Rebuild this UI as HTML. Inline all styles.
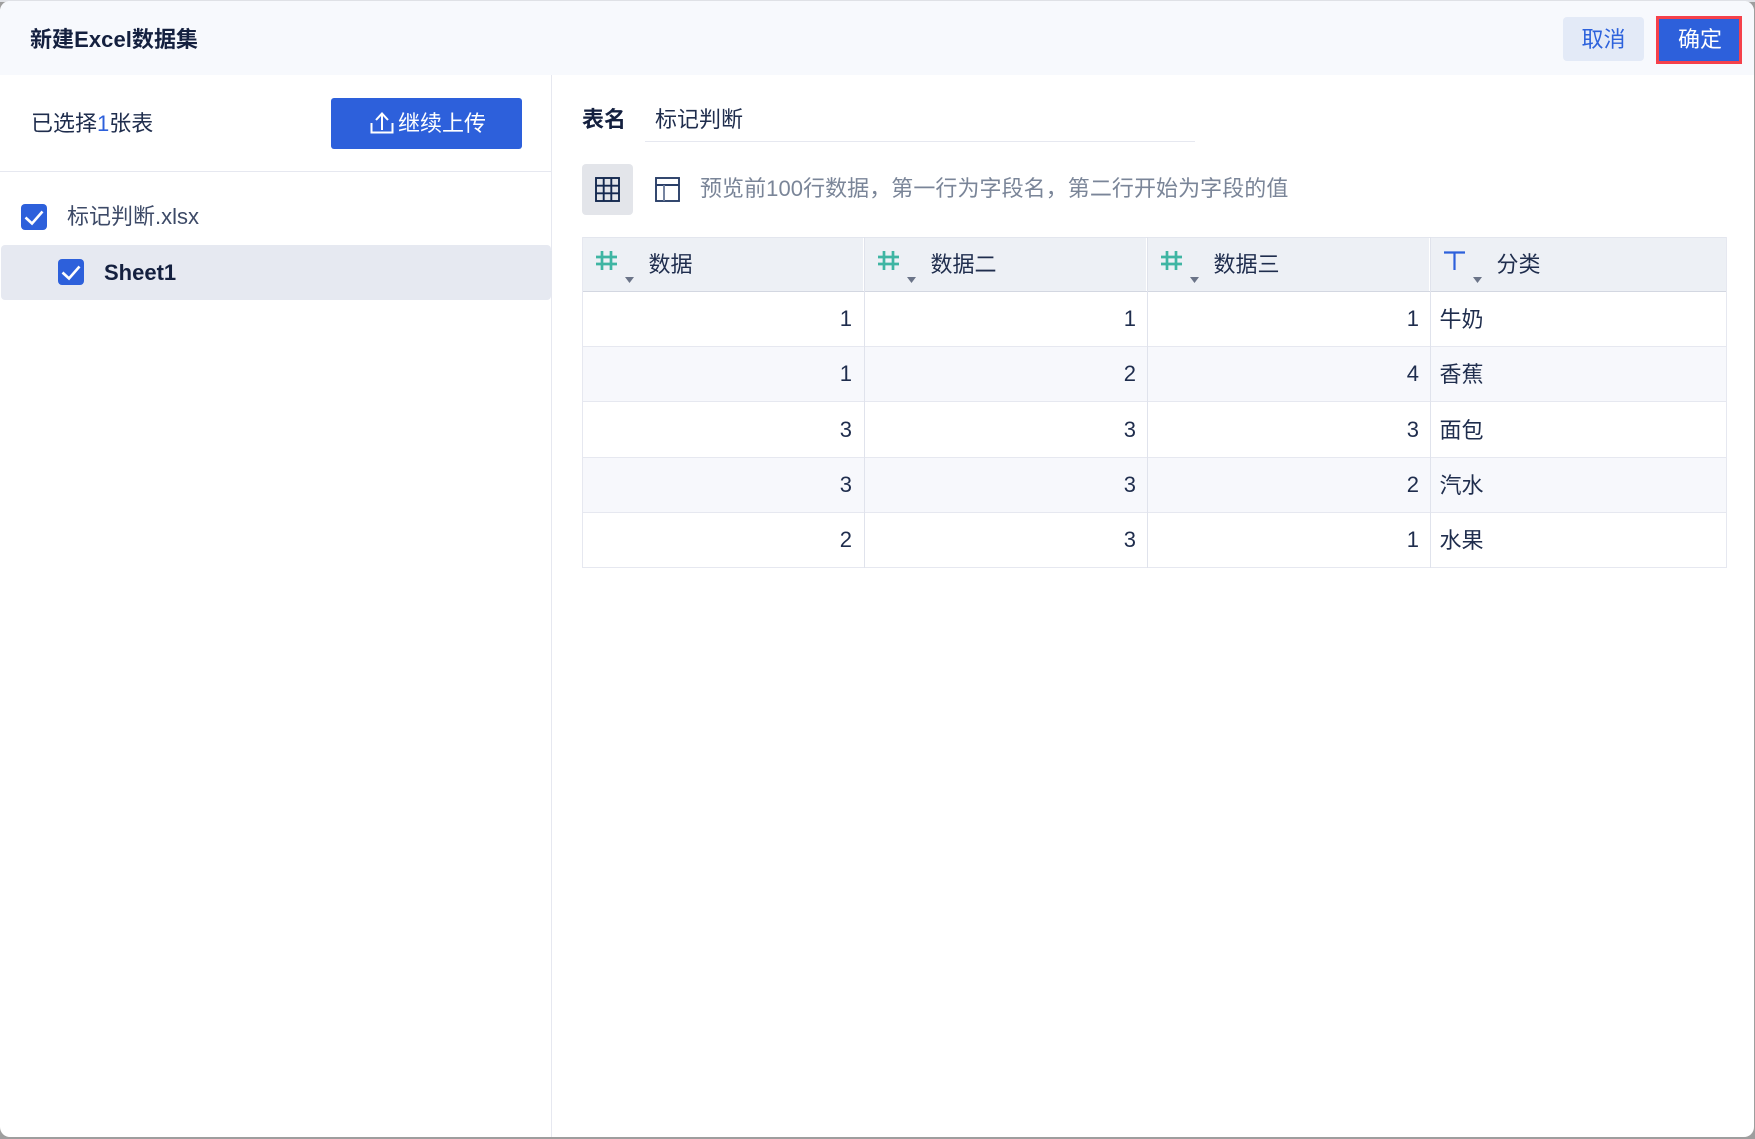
<!DOCTYPE html>
<html lang="zh">
<head>
<meta charset="utf-8">
<title>新建Excel数据集</title>
<style>
html,body{margin:0;padding:0;width:1755px;height:1139px;overflow:hidden;background:#9e9e9e;}
body{position:relative;font-family:"Liberation Sans","Noto Sans CJK SC",sans-serif;font-size:22px;color:#1f2d4d;}
.abs,.t,.r,svg{position:absolute;}
.t{white-space:nowrap;line-height:30px;height:30px;}
.r{white-space:nowrap;line-height:30px;height:30px;text-align:right;}
#top{position:absolute;left:0;top:0;width:1755px;height:2px;background:#dfe1e6;}
#win{position:absolute;left:0;top:1px;width:1754px;height:1136px;background:#fff;border-radius:10px;overflow:hidden;}
#stage{position:absolute;left:0;top:0;width:1755px;height:1139px;}
</style>
</head>
<body>
<div id="top"></div>
<div id="win"></div>
<div id="stage">
  <div class="abs" style="left:0;top:1px;width:1754px;height:74px;background:#f7f9fd;border-radius:10px 10px 0 0;"></div>
  <div class="t" style="left:30px;top:25px;font-weight:700;color:#14203f;letter-spacing:.06px;">新建Excel数据集</div>

  <div class="abs" style="left:1563px;top:17px;width:81px;height:44px;background:#e3eaf7;border-radius:4px;"></div>
  <div class="t" style="left:1563px;top:25px;width:81px;text-align:center;color:#2d62dc;">取消</div>
  <div class="abs" style="left:1656px;top:16px;width:80px;height:42px;background:#2d60db;border:3px solid #f5414b;"></div>
  <div class="t" style="left:1657px;top:25px;width:86px;text-align:center;color:#fff;">确定</div>

  <div class="abs" style="left:551px;top:75px;width:1px;height:1062px;background:#e6e8f0;"></div>

  <div class="t" style="left:31px;top:109px;">已选择<span style="color:#2d60db;">1</span>张表</div>
  <div class="abs" style="left:331px;top:98px;width:191px;height:51px;background:#2d60db;border-radius:3px;"></div>
  <svg style="left:370px;top:112px;" width="24" height="22" viewBox="0 0 24 22" fill="none" stroke="#fff" stroke-width="2"><path d="M1.500 11V20.500H22.500V11"/><path d="M12 18V2M6 8L12 1.500L18 8"/></svg>
  <div class="t" style="left:398px;top:109px;color:#fff;">继续上传</div>

  <div class="abs" style="left:0;top:171px;width:551px;height:1px;background:#e6e8f0;"></div>

  <div class="abs" style="left:21px;top:204px;width:26px;height:26px;background:#2d60db;border-radius:4px;"></div>
  <svg style="left:21px;top:204px;" width="26" height="26" viewBox="0 0 26 26" fill="none" stroke="#fff" stroke-width="2.600"><path d="M4.500 13.500L11 19.500L21.500 7.500"/></svg>
  <div class="t" style="left:67px;top:202px;color:#3d4a67;">标记判断.xlsx</div>

  <div class="abs" style="left:1px;top:245px;width:550px;height:55px;background:#e6e9f1;border-radius:4px;"></div>
  <div class="abs" style="left:58px;top:259px;width:26px;height:26px;background:#2d60db;border-radius:4px;"></div>
  <svg style="left:58px;top:259px;" width="26" height="26" viewBox="0 0 26 26" fill="none" stroke="#fff" stroke-width="2.600"><path d="M4.500 13.500L11 19.500L21.500 7.500"/></svg>
  <div class="t" style="left:104px;top:258px;font-weight:700;color:#14203f;">Sheet1</div>

  <div class="t" style="left:582px;top:105px;font-weight:700;color:#14203f;">表名</div>
  <div class="t" style="left:655px;top:105px;">标记判断</div>
  <div class="abs" style="left:645px;top:141px;width:550px;height:1px;background:#e6e8f0;"></div>

  <div class="abs" style="left:582px;top:164px;width:51px;height:51px;background:#e3e5ea;border-radius:4px;"></div>
  <svg style="left:595px;top:177px;" width="25" height="25" viewBox="0 0 25 25" fill="none" stroke="#14284f" stroke-width="1.900"><rect x="1" y="1" width="23" height="23"/><path d="M8.700 1V24M16.300 1V24M1 8.700H24M1 16.300H24"/></svg>
  <svg style="left:655px;top:177px;" width="25" height="25" viewBox="0 0 25 25" fill="none"><rect x="1" y="1" width="23" height="23" stroke="#2a3f68" stroke-width="1.900"/><path d="M1 8H24" stroke="#2a3f68" stroke-width="1.900"/><path d="M9 8V24" stroke="#6f7e9b" stroke-width="1.900"/></svg>
  <div class="t" style="left:700px;top:174px;color:#7a8598;letter-spacing:.06px;">预览前100行数据，第一行为字段名，第二行开始为字段的值</div>

  <!-- table -->
  <div class="abs" style="left:582px;top:237px;width:1145px;height:54px;background:#edf0f5;"></div>
  <div class="abs" style="left:582px;top:347px;width:1145px;height:55px;background:#f7f8fc;"></div>
  <div class="abs" style="left:582px;top:458px;width:1145px;height:55px;background:#f7f8fc;"></div>

  <div class="abs" style="left:582px;top:237px;width:1145px;height:1px;background:#e3e6ee;"></div>
  <div class="abs" style="left:582px;top:291px;width:1145px;height:1px;background:#d3d7e1;"></div>
  <div class="abs" style="left:582px;top:346px;width:1145px;height:1px;background:#e6e8f0;"></div>
  <div class="abs" style="left:582px;top:401px;width:1145px;height:1px;background:#e6e8f0;"></div>
  <div class="abs" style="left:582px;top:457px;width:1145px;height:1px;background:#e6e8f0;"></div>
  <div class="abs" style="left:582px;top:512px;width:1145px;height:1px;background:#e6e8f0;"></div>
  <div class="abs" style="left:582px;top:567px;width:1145px;height:1px;background:#e6e8f0;"></div>

  <div class="abs" style="left:582px;top:237px;width:1px;height:331px;background:#e6e8f0;"></div>
  <div class="abs" style="left:864px;top:237px;width:1px;height:331px;background:#e0e3ec;"></div>
  <div class="abs" style="left:1147px;top:237px;width:1px;height:331px;background:#e0e3ec;"></div>
  <div class="abs" style="left:1430px;top:237px;width:1px;height:331px;background:#e0e3ec;"></div>
  <div class="abs" style="left:1726px;top:237px;width:1px;height:331px;background:#e6e8f0;"></div>
  <div class="abs" style="left:863px;top:238px;width:1px;height:53px;background:#fff;"></div>
  <div class="abs" style="left:1146px;top:238px;width:1px;height:53px;background:#fff;"></div>
  <div class="abs" style="left:1429px;top:238px;width:1px;height:53px;background:#fff;"></div>

  <svg style="left:596px;top:251px;" width="21" height="19" viewBox="0 0 21 19" fill="none" stroke="#3fb5a3" stroke-width="2.700"><path d="M0 6H21M0 13H21M6 0V19M15 0V19"/></svg>
  <svg style="left:878px;top:251px;" width="21" height="19" viewBox="0 0 21 19" fill="none" stroke="#3fb5a3" stroke-width="2.700"><path d="M0 6H21M0 13H21M6 0V19M15 0V19"/></svg>
  <svg style="left:1161px;top:251px;" width="21" height="19" viewBox="0 0 21 19" fill="none" stroke="#3fb5a3" stroke-width="2.700"><path d="M0 6H21M0 13H21M6 0V19M15 0V19"/></svg>
  <svg style="left:1444px;top:251px;" width="21" height="19" viewBox="0 0 21 19" fill="none" stroke="#2d60db" stroke-width="2.200"><path d="M0 1.500H21M10.500 1.500V19"/></svg>

  <svg style="left:625px;top:277px;" width="9" height="6" viewBox="0 0 9 6"><path d="M0 0H9L4.500 6Z" fill="#6b7488"/></svg>
  <svg style="left:907px;top:277px;" width="9" height="6" viewBox="0 0 9 6"><path d="M0 0H9L4.500 6Z" fill="#6b7488"/></svg>
  <svg style="left:1190px;top:277px;" width="9" height="6" viewBox="0 0 9 6"><path d="M0 0H9L4.500 6Z" fill="#6b7488"/></svg>
  <svg style="left:1473px;top:277px;" width="9" height="6" viewBox="0 0 9 6"><path d="M0 0H9L4.500 6Z" fill="#6b7488"/></svg>

  <div class="t" style="left:648.500px;top:250px;">数据</div>
  <div class="t" style="left:930.500px;top:250px;">数据二</div>
  <div class="t" style="left:1213.500px;top:250px;">数据三</div>
  <div class="t" style="left:1496.500px;top:250px;">分类</div>

  <div class="r" style="left:752px;top:304px;width:100px;">1</div>
  <div class="r" style="left:1036px;top:304px;width:100px;">1</div>
  <div class="r" style="left:1319px;top:304px;width:100px;">1</div>
  <div class="t" style="left:1439.500px;top:305px;">牛奶</div>

  <div class="r" style="left:752px;top:359px;width:100px;">1</div>
  <div class="r" style="left:1036px;top:359px;width:100px;">2</div>
  <div class="r" style="left:1319px;top:359px;width:100px;">4</div>
  <div class="t" style="left:1439.500px;top:360px;">香蕉</div>

  <div class="r" style="left:752px;top:415px;width:100px;">3</div>
  <div class="r" style="left:1036px;top:415px;width:100px;">3</div>
  <div class="r" style="left:1319px;top:415px;width:100px;">3</div>
  <div class="t" style="left:1439.500px;top:416px;">面包</div>

  <div class="r" style="left:752px;top:470px;width:100px;">3</div>
  <div class="r" style="left:1036px;top:470px;width:100px;">3</div>
  <div class="r" style="left:1319px;top:470px;width:100px;">2</div>
  <div class="t" style="left:1439.500px;top:471px;">汽水</div>

  <div class="r" style="left:752px;top:525px;width:100px;">2</div>
  <div class="r" style="left:1036px;top:525px;width:100px;">3</div>
  <div class="r" style="left:1319px;top:525px;width:100px;">1</div>
  <div class="t" style="left:1439.500px;top:526px;">水果</div>
</div>
</body>
</html>
